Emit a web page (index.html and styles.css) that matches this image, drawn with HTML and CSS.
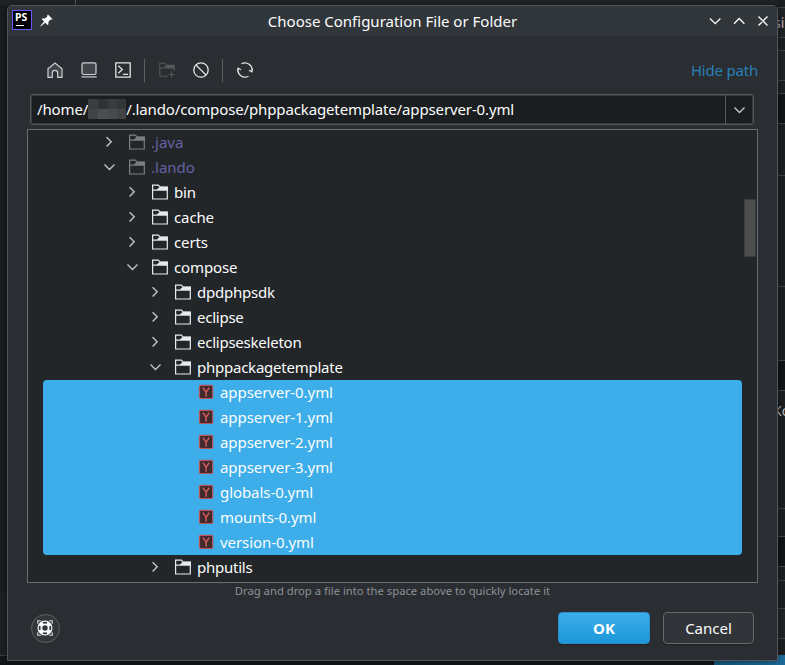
FILE: index.html
```html
<!DOCTYPE html>
<html lang="en">
<head>
<meta charset="utf-8">
<title>Choose Configuration File or Folder</title>
<link rel="stylesheet" href="styles.css">
</head>
<body>
<svg class="defs" width="0" height="0">
  <symbol id="right" viewBox="0 0 16 16"><path d="M5.600 3.200l4.600 4.600-4.600 4.600" fill="none" stroke="currentColor" stroke-width="1.400"/></symbol>
  <symbol id="down" viewBox="0 0 16 16"><path d="M3.500 5.400l5 5 5-5" fill="none" stroke="currentColor" stroke-width="1.400"/></symbol>
  <symbol id="folder" viewBox="0 0 16 16"><path d="M.6 15V1.100h5.700l2 2h7V15zM.6 6.100h4.400l3.200-3" fill="none" stroke="currentColor" stroke-width="1.200"/><path d="M8.300 2.700H15.900v4H5z" fill="currentColor"/></symbol>
  <symbol id="yml" viewBox="0 0 16 16"><rect x="1.500" y="1.300" width="13.200" height="13.200" rx="1.200" fill="#402a2d" stroke="#b9565c" stroke-width="1.200"/><path d="M4.900 3.600l3.200 4.600 3.200-4.600M8.100 7.900v4.800" fill="none" stroke="#db5c5c" stroke-width="1.400"/></symbol>
</svg>
<div class="backdrop"><i></i><b></b></div>
<div class="behind">
  <div class="seg s1"></div><div class="seg field s2">si</div><div class="seg s3"></div><div class="seg field s4"></div>
  <div class="seg s5"></div><div class="seg dark s6"></div><div class="seg s7"></div><div class="seg s8"></div>
  <div class="seg s9"></div><div class="seg dark s10"></div><div class="seg s11">Ko</div><div class="seg s12"></div>
  <div class="seg dark s13"></div><div class="seg s14"></div><div class="seg s15"></div><div class="seg field s16"></div><div class="seg s17"></div>
</div>
<main class="window">
  <header class="titlebar">
    <div class="app"><span>PS</span></div>
    <svg class="pin" width="13" height="13" viewBox="0 0 13 13"><path d="M8 .5L12.500 5l-1 .8-1-.2-2.200 2.300.2 2.300-1 .9-2.300-2.300L1 12.300l-.6.1.1-.6 3.600-4.200-2.300-2.300.9-1 2.400.2L7.400 2.300 7.200 1.300z" fill="#fcfcfc"/></svg>
    <h1>Choose Configuration File or Folder</h1>
    <svg class="controls" width="62" height="14" viewBox="0 0 62 14"><path d="M2 4.500l5.200 5.200 5.200-5.200M26 9.700l5.200-5.200 5.200 5.200M50.500 2.500l9 9M59.500 2.500l-9 9" fill="none" stroke="#fcfcfc" stroke-width="1.300"/></svg>
  </header>
  <div class="toolbar">
    <svg class="tool" viewBox="0 0 16 16"><path d="M1 6.800L8 1l7 5.800v8.500h-4.300V11a2.700 2.700 0 0 0-5.400 0v4.300H1z" fill="#43454a" stroke="#ced0d6" stroke-width="1.200"/></svg>
    <svg class="tool" viewBox="0 0 16 16"><rect x="1" y=".8" width="14" height="11.700" rx="1.500" fill="#43454a" stroke="#ced0d6" stroke-width="1.200"/><path d="M.4 14.900h15.200" stroke="#ced0d6" stroke-width="1.200"/></svg>
    <svg class="tool" viewBox="0 0 16 16"><path d="M.8.800h14.400v14.400H.8zM3.300 3.800l4 3.700-4 3.700M8 12.400h5" fill="none" stroke="#e2e4e6" stroke-width="1.300"/></svg>
    <span class="sep"></span>
    <svg class="tool" viewBox="0 0 16 16"><path d="M9 14.300H.8V1.200h5l2 2h7.400v5.500M.8 6h4.500l2.500-2.500M12.600 9.500v6M9.600 12.500h6" fill="none" stroke="#55585b" stroke-width="1.100"/><path d="M7.500 3h8v3.500h-10z" fill="#55585b"/></svg>
    <svg class="tool" viewBox="0 0 16 16"><circle cx="8" cy="8" r="7.200" fill="none" stroke="#e2e4e6" stroke-width="1.300"/><path d="M3 3l10 10" stroke="#e2e4e6" stroke-width="1.300"/></svg>
    <span class="sep"></span>
    <svg class="tool" viewBox="0 0 16 16"><path d="M4.500 1.800A7.100 7.100 0 0 1 14.900 9.500M11.500 14.200A7.100 7.100 0 0 1 1.100 6.500M.2 9.200l1-2.900 2.800 1.500M15.800 6.800l-1 2.900L12 8.200" fill="none" stroke="#e2e4e6" stroke-width="1.300"/></svg>
    <a class="hide">Hide path</a>
  </div>
  <div class="path">
    <div class="value"><span>/home/</span><span class="mask"></span><span>/.lando/compose/phppackagetemplate/appserver-0.yml</span></div>
    <div class="drop"><svg width="16" height="16"><use href="#down"/></svg></div>
  </div>
  <div class="tree">
    <div class="rows">
      <div class="row muted"><svg class="arrow"><use href="#right"/></svg><svg class="icon"><use href="#folder"/></svg><span>.java</span></div>
      <div class="row muted"><svg class="arrow"><use href="#down"/></svg><svg class="icon"><use href="#folder"/></svg><span>.lando</span></div>
      <div class="row l1"><svg class="arrow"><use href="#right"/></svg><svg class="icon"><use href="#folder"/></svg><span>bin</span></div>
      <div class="row l1"><svg class="arrow"><use href="#right"/></svg><svg class="icon"><use href="#folder"/></svg><span>cache</span></div>
      <div class="row l1"><svg class="arrow"><use href="#right"/></svg><svg class="icon"><use href="#folder"/></svg><span>certs</span></div>
      <div class="row l1"><svg class="arrow"><use href="#down"/></svg><svg class="icon"><use href="#folder"/></svg><span>compose</span></div>
      <div class="row l2"><svg class="arrow"><use href="#right"/></svg><svg class="icon"><use href="#folder"/></svg><span>dpdphpsdk</span></div>
      <div class="row l2"><svg class="arrow"><use href="#right"/></svg><svg class="icon"><use href="#folder"/></svg><span>eclipse</span></div>
      <div class="row l2"><svg class="arrow"><use href="#right"/></svg><svg class="icon"><use href="#folder"/></svg><span>eclipseskeleton</span></div>
      <div class="row l2"><svg class="arrow"><use href="#down"/></svg><svg class="icon"><use href="#folder"/></svg><span>phppackagetemplate</span></div>
      <div class="selected">
        <div class="row l3"><svg class="icon"><use href="#yml"/></svg><span>appserver-0.yml</span></div>
        <div class="row l3"><svg class="icon"><use href="#yml"/></svg><span>appserver-1.yml</span></div>
        <div class="row l3"><svg class="icon"><use href="#yml"/></svg><span>appserver-2.yml</span></div>
        <div class="row l3"><svg class="icon"><use href="#yml"/></svg><span>appserver-3.yml</span></div>
        <div class="row l3"><svg class="icon"><use href="#yml"/></svg><span>globals-0.yml</span></div>
        <div class="row l3"><svg class="icon"><use href="#yml"/></svg><span>mounts-0.yml</span></div>
        <div class="row l3"><svg class="icon"><use href="#yml"/></svg><span>version-0.yml</span></div>
      </div>
      <div class="row l2"><svg class="arrow"><use href="#right"/></svg><svg class="icon"><use href="#folder"/></svg><span>phputils</span></div>
    </div>
    <div class="thumb"></div>
  </div>
  <p class="hint">Drag and drop a file into the space above to quickly locate it</p>
  <footer class="actions">
    <button class="help" aria-label="Help"><svg width="16" height="16" viewBox="0 0 16 16"><path d="M.8 3.800V.8h3M12.200.8h3v3M15.200 12.200v3h-3M3.800 15.200h-3v-3" fill="none" stroke="#dfe1e2" stroke-width="1.100"/><circle cx="8" cy="8" r="5.100" fill="none" stroke="#fcfcfc" stroke-width="4.800"/><path d="M6 2.900q2-.7 4 0M6 13.100q2 .7 4 0M2.900 6q-.7 2 0 4M13.100 6q.7 2 0 4" fill="none" stroke="#31363b" stroke-width="1.800"/></svg></button>
    <button class="btn ok">OK</button>
    <button class="btn cancel">Cancel</button>
  </footer>
</main>
</body>
</html>
```
FILE: styles.css
```css
* { box-sizing: border-box; }
body {
  margin: 0;
  width: 785px;
  height: 665px;
  overflow: hidden;
  position: relative;
  background: #1b1c1e;
  color: #fcfcfc;
  font: 15px/25px "Noto Sans", sans-serif;
}
svg { display: block; flex: none; }
.defs { position: absolute; }

/* Parts of the parent window that stay visible around the dialog */
.backdrop { position: absolute; inset: 0; background: linear-gradient(#212427 0 5px, transparent 5px 593px, #1e2124 593px 655px, #3a3d40 655px 656px, #141517 656px); }
.backdrop i { position: absolute; left: 75px; top: 0; width: 1px; height: 5px; background: #55585b; }
.backdrop b { position: absolute; left: 714px; bottom: 0; width: 71px; height: 10px; background: linear-gradient(90deg, #17577a, #1c6d9b); }
.behind { position: absolute; left: 778px; top: 0; width: 7px; display: flex; flex-direction: column; }
.seg { border-bottom: 1px solid #404346; background: #1d1e21; overflow: hidden; white-space: nowrap; font-size: 14px; color: #b5b7b9; }
.field { background: #202427; }
.dark { background: #131415; }
.s1 { height: 8px; } .s2 { height: 30px; line-height: 30px; text-indent: -4px; } .s3 { height: 13px; } .s4 { height: 30px; }
.s5 { height: 13px; } .s6 { height: 30px; } .s7 { height: 52px; } .s8 { height: 111px; }
.s9 { height: 74px; } .s10 { height: 30px; } .s11 { height: 118px; line-height: 40px; text-indent: -5px; } .s12 { height: 28px; }
.s13 { height: 30px; } .s14 { height: 14px; } .s15 { height: 28px; } .s16 { height: 30px; } .s17 { height: 16px; border: 0; }

.window {
  position: relative;
  width: 771px;
  height: 656px;
  margin: 5px 0 0 7px;
  border: 1px solid #50565b;
  border-radius: 5px 5px 0 0;
  background: #2a2d31;
  box-shadow: 0 0 6px rgba(0, 0, 0, .5);
  display: flex;
  flex-direction: column;
}
.titlebar { height: 30px; flex: none; display: flex; align-items: center; padding: 0 7px 0 4px; background: #31363a; border-radius: 4px 4px 0 0; }
.app { width: 20px; height: 20px; margin-top: -2px; border: 1px solid #6b57ff; background: #000; color: #fff; font: bold 10.500px/11px "Noto Sans", sans-serif; padding: 1px 0 0 2px; }
.app::after { content: ""; display: block; width: 8px; height: 1px; margin: 2px 0 0 1px; background: #fff; }
.app span { display: block; }
.pin { margin: -2px 0 0 8px; }
.titlebar h1 { flex: 1; margin: 0; padding-left: 24px; font-size: 15px; font-weight: 400; text-align: center; color: #fcfcfc; }
.controls { margin-top: -1px; }

.toolbar { height: 34px; margin: 17px 19px 0 39px; display: flex; align-items: center; flex: none; }
.tool { width: 16px; height: 16px; margin-right: 18px; }
.tool:nth-child(3), .tool:nth-child(6) { margin-right: 13px; }
.sep { width: 1px; height: 23px; margin-right: 14px; background: #5c6063; }
.hide { margin-left: auto; color: #2980b9; letter-spacing: -.2px; }

.path { height: 31px; margin: 7px 23px 0 22px; flex: none; display: flex; border: 1px solid #565a5d; border-radius: 3px; background: #1b1e20; box-shadow: inset 0 0 0 1px #363a3d; }
.value { flex: 1; display: flex; align-items: center; padding-left: 6px; letter-spacing: -.13px; }
.mask { width: 38px; height: 20px; margin-top: -1px; background: linear-gradient(90deg, #3b3e40 0 10px, #303335 10px 20px, #393c3e 20px 29px, #343739 29px) 0 0 / 100% 10px no-repeat, linear-gradient(90deg, #414345 0 10px, #4b4f51 10px 20px, #474a4c 20px 29px, #404244 29px) 0 10px / 100% 10px no-repeat; }
.drop { width: 28px; border-left: 1px solid #565a5d; display: flex; align-items: center; justify-content: center; color: #c5c7c8; }
.drop svg { margin-right: 1px; }

.tree { width: 731px; height: 454px; margin: 4px 0 0 19px; flex: none; border: 1px solid #6b6f71; background: #232629; display: flex; justify-content: space-between; }
.rows { width: 699px; margin-left: 15px; }
.row { height: 25px; display: flex; align-items: center; padding-left: 58px; }
.arrow { width: 16px; height: 16px; margin: -1px 12px 0 0; color: #c2c4c5; }
.icon { width: 16px; height: 16px; margin: -1px 6px 0 0; color: #e8e9ea; }
.muted { color: #6362a3; }
.muted .icon { color: #7c7e80; }
.l1 { padding-left: 81px; letter-spacing: -.12px; }
.l2 { padding-left: 104px; letter-spacing: -.24px; }
.l3 { padding-left: 155px; letter-spacing: -.07px; }
.selected { background: #3daee9; border-radius: 4px; }
.thumb { width: 12px; height: 58px; margin: 69px 1px 0 0; border: 1px solid #3c3c3d; background: #4e4e4f; }

.hint { margin: 0; height: 17px; line-height: 15px; text-align: center; font-size: 11.250px; color: #8a9197; }
.actions { display: flex; align-items: center; margin: 12px 23px 0 23px; height: 32px; }
.help { width: 29px; height: 29px; padding: 0; margin-right: auto; border: 1px solid #5e6265; border-radius: 50%; background: #31363b; display: flex; align-items: center; justify-content: center; }
.help svg { margin: -1px 1px 0 0; }
.btn { width: 92px; height: 32px; padding: 0 0 1px; border-radius: 4px; font: 15px "Noto Sans", sans-serif; color: #fcfcfc; box-shadow: 0 1px 1px rgba(0, 0, 0, .25); }
.ok { margin-right: 13px; border: 1px solid #2990c9; background: linear-gradient(#3daee9, #1d97d9); font-weight: 700; }
.cancel { width: 91px; border: 1px solid #65696c; background: #31353a; }
```
